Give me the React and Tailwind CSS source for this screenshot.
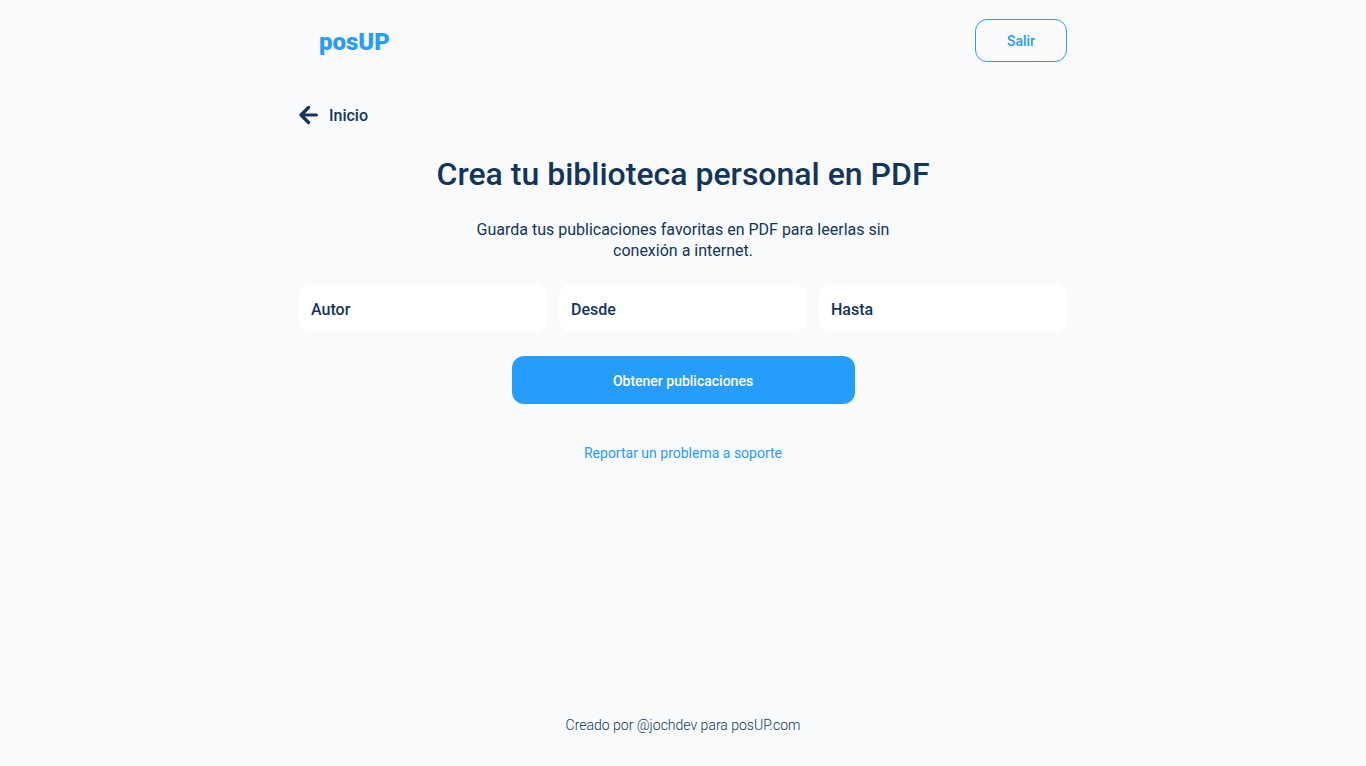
const filters = ["Autor", "Desde", "Hasta"];

export default function App() {
  return (
    <div className="flex min-h-screen flex-col bg-[#f9fafc] font-['Roboto',sans-serif] text-[#12355b]">
      <div className="mx-auto flex w-full max-w-3xl grow flex-col">
        <header className="flex items-center justify-between pt-[19px]">
          <a href="#inicio" className="px-5 pt-0.5 text-2xl font-black text-[#269dfa]">posUP</a>
          <button type="button" className="h-[43px] w-[92px] rounded-xl border border-[#269dfa] text-sm font-medium text-[#269dfa]">Salir</button>
        </header>
        <main className="flex flex-col items-center pt-10">
          <a href="#inicio" className="flex items-center gap-2.5 self-start font-medium">
            <svg className="h-5 w-5" viewBox="0 0 20 20" fill="none" stroke="currentColor" strokeWidth="3.2" strokeLinecap="round" strokeLinejoin="round" aria-hidden="true">
              <path d="M17.4 10H2M9.5 2.5L2 10L9.5 17.5" />
            </svg>
            <span className="pt-0.5">Inicio</span>
          </a>
          <h1 className="mt-[25px] text-center text-[32px] leading-[42px] font-medium">Crea tu biblioteca personal en PDF</h1>
          <p className="mt-6 max-w-[430px] text-center text-base leading-[21px]">Guarda tus publicaciones favoritas en PDF para leerlas sin conexión a internet.</p>
          <form className="mt-[23px] flex w-full flex-col items-center">
            <div className="grid w-full grid-cols-3 gap-3">
              {filters.map((name) => (
                <input key={name} type="text" aria-label={name} placeholder={name} className="h-12 w-full min-w-0 rounded-xl bg-white px-3 pt-0.5 text-base font-medium outline-none placeholder:text-[#12355b]" />
              ))}
            </div>
            <button type="button" className="mt-6 h-12 w-full max-w-[343px] rounded-xl bg-[#269dfa] pt-0.5 text-sm font-medium text-white">Obtener publicaciones</button>
          </form>
          <a href="#soporte" className="mt-[39px] text-sm text-[#269dfa]">Reportar un problema a soporte</a>
        </main>
        <footer className="mt-auto pb-[31px] text-center text-sm font-light">Creado por @jochdev para posUP.com</footer>
      </div>
    </div>
  );
}
